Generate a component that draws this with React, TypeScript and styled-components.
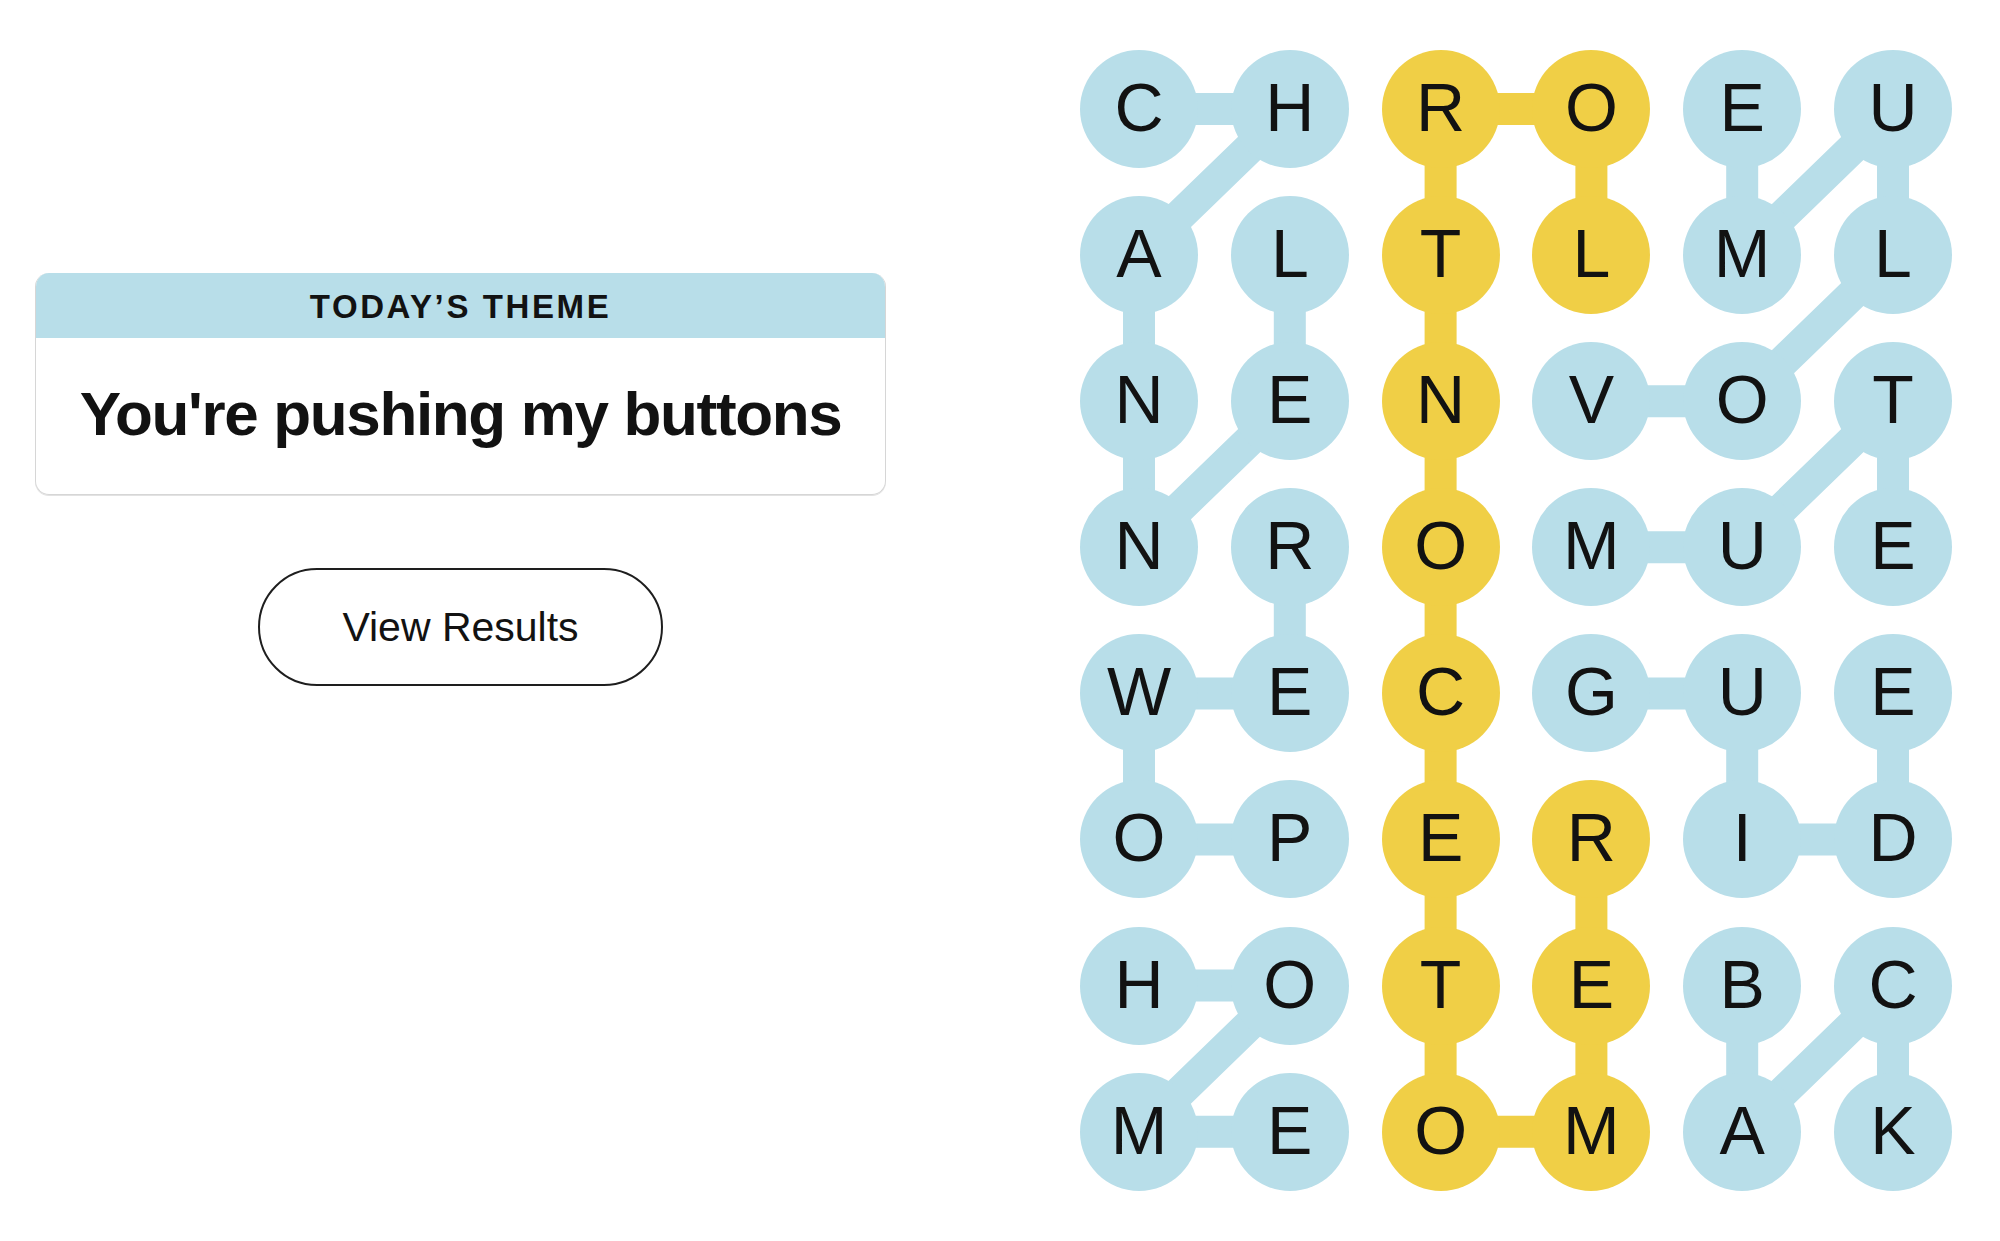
import React from 'react';
import styled, { createGlobalStyle } from 'styled-components';

const CELL = 118;
const COL_GAP = 32.8;
const ROW_GAP = 28.1;

const BLUE = '#b8dee9';
const YELLOW = '#f0cf46';
const INK = '#121212';

const GlobalStyle = createGlobalStyle`
  html, body {
    margin: 0;
    background: #fff;
  }
  body {
    font-family: 'Liberation Sans', Arial, sans-serif;
    color: ${INK};
  }
  * {
    box-sizing: border-box;
  }
`;

const Page = styled.div`
  display: flex;
  align-items: flex-start;
  gap: 194px;
  padding: 50px 0 0 35px;
  min-height: 100vh;
`;

const SidePanel = styled.section`
  width: 851px;
  padding-top: 223px;
  display: flex;
  flex-direction: column;
  align-items: center;
  gap: 73px;
`;

const ThemeCard = styled.div`
  width: 100%;
  height: 222px;
  display: flex;
  flex-direction: column;
  border: 1.5px solid #d6d6d6;
  border-top: none;
  border-radius: 14px;
  box-shadow: 0 1px 0 #e2e2e2;
  overflow: hidden;
`;

const ThemeLabel = styled.div`
  height: 65px;
  display: flex;
  align-items: center;
  justify-content: center;
  background: ${BLUE};
  font-size: 33px;
  font-weight: 700;
  letter-spacing: 2.6px;
  padding-top: 2px;
`;

const ThemeText = styled.div`
  flex: 1;
  display: flex;
  align-items: center;
  justify-content: center;
  font-size: 62px;
  font-weight: 700;
  letter-spacing: -1.35px;
  padding-bottom: 6px;
`;

const ResultsButton = styled.button`
  width: 405px;
  height: 118px;
  border: 2px solid #1e1e1e;
  border-radius: 59px;
  background: #fff;
  color: ${INK};
  font-family: 'Liberation Sans', Arial, sans-serif;
  font-size: 41px;
  cursor: pointer;
`;

const Board = styled.div`
  position: relative;
  width: ${CELL * 6 + COL_GAP * 5}px;
  height: ${CELL * 8 + ROW_GAP * 7}px;
`;

const Links = styled.svg`
  position: absolute;
  inset: 0;
  width: 100%;
  height: 100%;
  overflow: visible;
`;

const LetterGrid = styled.div`
  position: relative;
  display: grid;
  grid-template-columns: repeat(6, ${CELL}px);
  grid-template-rows: repeat(8, ${CELL}px);
  column-gap: ${COL_GAP}px;
  row-gap: ${ROW_GAP}px;
`;

const Letter = styled.div<{ $tone: 'blue' | 'yellow' }>`
  width: ${CELL}px;
  height: ${CELL}px;
  border-radius: 50%;
  background: ${(p) => (p.$tone === 'yellow' ? YELLOW : BLUE)};
  display: flex;
  align-items: center;
  justify-content: center;
  font-size: 68px;
  line-height: 1;
  padding-bottom: 4px;
  user-select: none;
`;

const LETTERS = [
  'CHROEU',
  'ALTLML',
  'NENVOT',
  'NROMUE',
  'WECGUE',
  'OPERID',
  'HOTEBC',
  'MEOMAK',
];

type Cell = [number, number];

// found words as [row, col] chains
const WORDS: { tone: 'blue' | 'yellow'; path: Cell[] }[] = [
  { tone: 'blue', path: [[0, 0], [0, 1], [1, 0], [2, 0], [3, 0], [2, 1], [1, 1]] },
  { tone: 'blue', path: [[5, 1], [5, 0], [4, 0], [4, 1], [3, 1]] },
  {
    tone: 'yellow',
    path: [[5, 3], [6, 3], [7, 3], [7, 2], [6, 2], [5, 2], [4, 2], [3, 2], [2, 2], [1, 2], [0, 2], [0, 3], [1, 3]],
  },
  { tone: 'blue', path: [[2, 3], [2, 4], [1, 5], [0, 5], [1, 4], [0, 4]] },
  { tone: 'blue', path: [[3, 3], [3, 4], [2, 5], [3, 5]] },
  { tone: 'blue', path: [[4, 3], [4, 4], [5, 4], [5, 5], [4, 5]] },
  { tone: 'blue', path: [[6, 0], [6, 1], [7, 0], [7, 1]] },
  { tone: 'blue', path: [[6, 4], [7, 4], [6, 5], [7, 5]] },
];

const toneAt = (r: number, c: number) => {
  const hit = WORDS.find((w) => w.path.some(([pr, pc]) => pr === r && pc === c));
  return hit ? hit.tone : 'blue';
};

const cx = (c: number) => CELL / 2 + c * (CELL + COL_GAP);
const cy = (r: number) => CELL / 2 + r * (CELL + ROW_GAP);

export default function App() {
  return (
    <>
      <GlobalStyle />
      <Page>
        <SidePanel>
          <ThemeCard>
            <ThemeLabel>TODAY’S THEME</ThemeLabel>
            <ThemeText>You're pushing my buttons</ThemeText>
          </ThemeCard>
          <ResultsButton>View Results</ResultsButton>
        </SidePanel>

        <Board>
          <Links>
            {WORDS.map((w, i) => (
              <polyline
                key={i}
                points={w.path.map(([r, c]) => `${cx(c)},${cy(r)}`).join(' ')}
                fill="none"
                stroke={w.tone === 'yellow' ? YELLOW : BLUE}
                strokeWidth={32}
                strokeLinejoin="round"
              />
            ))}
          </Links>
          <LetterGrid>
            {LETTERS.map((row, r) =>
              row.split('').map((ch, c) => (
                <Letter key={`${r}-${c}`} $tone={toneAt(r, c)}>
                  {ch}
                </Letter>
              ))
            )}
          </LetterGrid>
        </Board>
      </Page>
    </>
  );
}
